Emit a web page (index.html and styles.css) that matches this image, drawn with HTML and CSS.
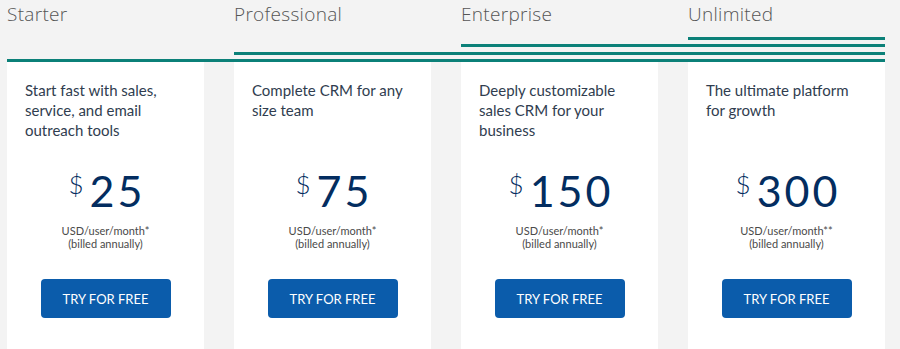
FILE: index.html
```html
<!DOCTYPE html>
<html lang="en">
<head>
<meta charset="utf-8">
<title>Pricing</title>
<link rel="stylesheet" href="styles.css">
</head>
<body>
<div class="pricing">
  <div class="header">
    <div class="title">Starter</div>
    <div class="title">Professional</div>
    <div class="title">Enterprise</div>
    <div class="title">Unlimited</div>
    <div class="rule rule-4"></div>
    <div class="rule rule-3"></div>
    <div class="rule rule-2"></div>
    <div class="rule rule-1"></div>
  </div>
  <div class="cards">
    <div class="card">
      <p class="desc">Start fast with sales, service, and email outreach tools</p>
      <div class="price"><span class="cur">$</span><span class="amount">25</span></div>
      <p class="terms">USD/user/month*<br>(billed annually)</p>
      <a class="btn" href="#">TRY FOR FREE</a>
    </div>
    <div class="card">
      <p class="desc">Complete CRM for any size team</p>
      <div class="price"><span class="cur">$</span><span class="amount">75</span></div>
      <p class="terms">USD/user/month*<br>(billed annually)</p>
      <a class="btn" href="#">TRY FOR FREE</a>
    </div>
    <div class="card">
      <p class="desc">Deeply customizable sales CRM for your business</p>
      <div class="price"><span class="cur">$</span><span class="amount">150</span></div>
      <p class="terms">USD/user/month*<br>(billed annually)</p>
      <a class="btn" href="#">TRY FOR FREE</a>
    </div>
    <div class="card">
      <p class="desc">The ultimate platform for growth</p>
      <div class="price"><span class="cur">$</span><span class="amount">300</span></div>
      <p class="terms">USD/user/month**<br>(billed annually)</p>
      <a class="btn" href="#">TRY FOR FREE</a>
    </div>
  </div>
</div>
</body>
</html>
```
FILE: styles.css
```css
html, body {
  margin: 0;
  padding: 0;
  height: 100%;
  overflow: hidden;
  background: #f3f3f3;
}

body {
  font-family: Lato, "Liberation Sans", sans-serif;
}

.pricing {
  padding-left: 7px;
}

.header {
  display: grid;
  grid-template-columns: repeat(4, 197px);
  column-gap: 30px;
}

.title {
  grid-row: 1;
  font-family: "Open Sans", "Liberation Sans", sans-serif;
  font-weight: 300;
  font-size: 19px;
  letter-spacing: 0.3px;
  line-height: 28px;
  color: #555555;
  padding-bottom: 9px;
}

.rule {
  height: 3px;
  background: #0b8078;
}

.rule-4 { grid-row: 2; grid-column: 4 / -1; }
.rule-3 { grid-row: 3; grid-column: 3 / -1; margin-top: 4px; }
.rule-2 { grid-row: 4; grid-column: 2 / -1; margin-top: 5px; }
.rule-1 { grid-row: 5; grid-column: 1 / -1; margin-top: 4px; }

.cards {
  display: grid;
  grid-template-columns: repeat(4, 197px);
  column-gap: 30px;
}

.card {
  background: #ffffff;
  height: 300px;
  padding: 18px 18px 0;
  box-sizing: border-box;
  display: flex;
  flex-direction: column;
  align-items: center;
}

.desc {
  align-self: stretch;
  margin: 0;
  height: 60px;
  font-size: 15px;
  line-height: 20px;
  color: #303d4f;
}

.price {
  margin-top: 29px;
  display: flex;
  align-items: flex-start;
  gap: 6px;
  color: #032d60;
}

.cur {
  font-size: 26px;
  font-weight: 300;
  line-height: 26px;
  margin-top: 2px;
}

.amount {
  font-size: 43px;
  line-height: 43px;
  letter-spacing: 3px;
  margin-right: -3px;
}

.terms {
  margin: 12px 0 0;
  text-align: center;
  font-size: 11px;
  line-height: 13px;
  color: #4a4a4a;
}

.btn {
  margin-top: 29px;
  width: 130px;
  height: 39px;
  border-radius: 4px;
  background: #0b5cab;
  color: #ffffff;
  text-decoration: none;
  font-size: 13px;
  display: flex;
  align-items: center;
  justify-content: center;
}
```
